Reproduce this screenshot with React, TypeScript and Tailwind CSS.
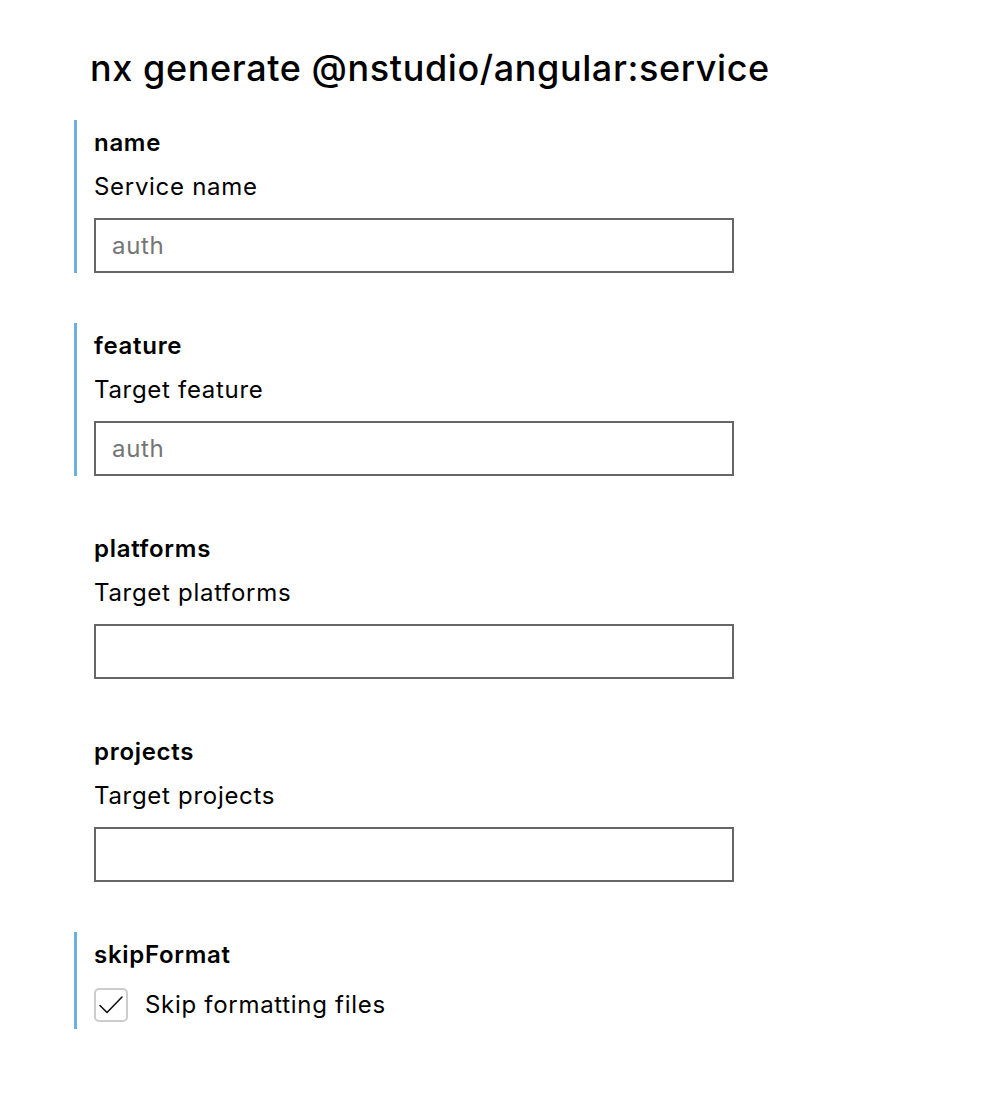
import React from 'react';

const fields = [
  { name: 'name', label: 'Service name', placeholder: 'auth', required: true },
  { name: 'feature', label: 'Target feature', placeholder: 'auth', required: true },
  { name: 'platforms', label: 'Target platforms', placeholder: '', required: false },
  { name: 'projects', label: 'Target projects', placeholder: '', required: false },
];

export default function App() {
  return (
    <div className="min-h-[1108px] bg-white text-black pl-[74px] pt-[46px] tracking-[0.7px]" style={{ fontFamily: 'Inter, "Noto Sans", sans-serif' }}>
      <h1 className="pl-[16px] text-[36px] leading-[44px] font-medium tracking-[0.6px]">nx generate @nstudio/angular:service</h1>

      <div className="mt-[30px] flex flex-col gap-[50px]">
        {fields.map((f) => (
          <div
            key={f.name}
            className={`border-l-[3px] pl-[17px] w-[660px] ${f.required ? 'border-[#6cb0e0]' : 'border-transparent'}`}
          >
            <div className="text-[24px] leading-[46px] font-semibold">{f.name}</div>
            <div className="text-[24px] leading-[42px]">{f.label}</div>
            <input
              type="text"
              placeholder={f.placeholder}
              className="mt-[10px] block w-[640px] h-[55px] border-2 border-[#666666] px-[16px] text-[24px] tracking-[0.7px] placeholder:text-[#757575] outline-none"
            />
          </div>
        ))}

        <div className="border-l-[3px] border-[#6cb0e0] pl-[17px] w-[660px] pb-[7px]">
          <div className="text-[24px] leading-[46px] font-semibold">skipFormat</div>
          <label className="mt-[10px] flex items-center gap-[17px]">
            <span className="w-[34px] h-[34px] rounded-[5px] border-2 border-[#cccccc] flex items-center justify-center">
              <svg width="26" height="22" viewBox="0 0 26 22" fill="none">
                <path d="M2 11.5 L9 18.5 L24 3" stroke="#111" strokeWidth="1.6" strokeLinecap="round" strokeLinejoin="round" />
              </svg>
            </span>
            <span className="text-[24px] leading-[34px]">Skip formatting files</span>
          </label>
        </div>
      </div>
    </div>
  );
}
